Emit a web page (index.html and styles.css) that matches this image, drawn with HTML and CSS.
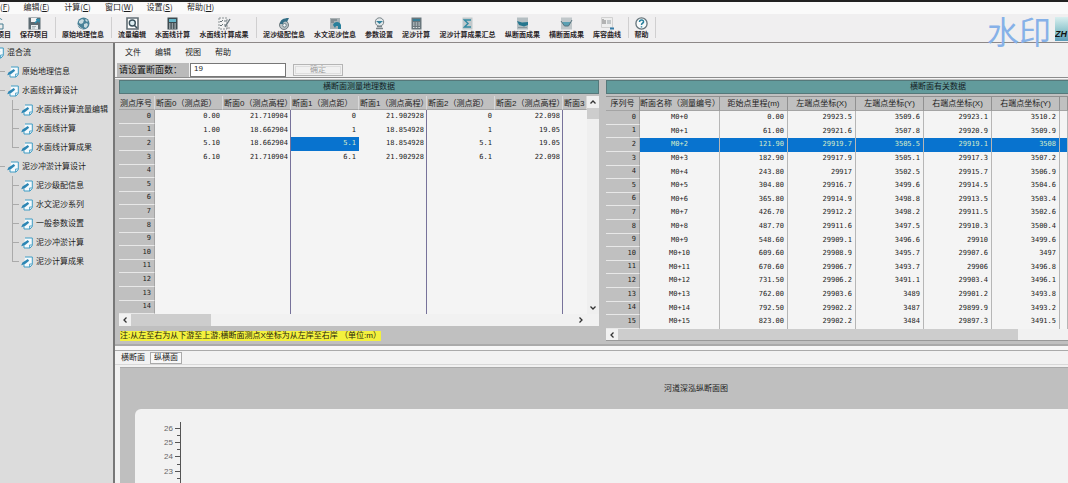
FILE: index.html
```html
<!DOCTYPE html>
<html lang="zh-CN">
<head>
<meta charset="utf-8">
<title>水面线计算</title>
<link rel="stylesheet" href="styles.css">
</head>
<body>
<svg class="defs" aria-hidden="true">
  <symbol id="doc" viewBox="0 0 12 12"><path d="M4 1h7.3v7.5L9 11H3V8.5" fill="#f4fafd" stroke="#3f9cc4" stroke-width="1"/><path d="M11 8H8.6v3" fill="none" stroke="#3f9cc4" stroke-width=".9"/><path d="M.2 9.200 1.400 6.600 6.800 3l1.400 1.700-4.400 3.500z" fill="#2c86b4"/></symbol>
</svg>
<nav class="menubar">
  <button class="first">文件(<u>F</u>)</button><button>编辑(<u>E</u>)</button><button>计算(<u>C</u>)</button><button>窗口(<u>W</u>)</button><button>设置(<u>S</u>)</button><button>帮助(<u>H</u>)</button>
</nav>
<header class="toolbar">
  <button class="c4"><svg viewBox="0 0 13 13"><path d="M2 5h4l1 2h5v5H2zM6 4c1-3 4-3 5-1" fill="#eee" stroke="#467d91"/></svg>打开项目</button>
  <button class="c4"><svg viewBox="0 0 13 13"><path d="M.5.5h12v12H.5z" fill="#5d6b73"/><path d="M3 1h6v4H3z" fill="#f2f2f2"/><path d="M3 8h7v4.500H3z" fill="#e9eef0"/><path d="M4 9.500h4M4 11h3" stroke="#88959b" stroke-width=".7"/><path d="M7 6l3-3M8 2.500h3v3" fill="none" stroke="#2f8eae" stroke-width="1.500"/></svg>保存项目</button>
  <i class="sep"></i>
  <button class="c6"><svg viewBox="0 0 13 13"><circle cx="6.500" cy="6.500" r="6" fill="#4a8298"/><path d="M2 4l3-2 2 1-1 3-2 1-2-1zM7 7l3-1 1 2-2 3-2-1zM9 2l2 2-1 1-2-2z" fill="#c9dbe0"/><path d="M1 8l3 3 2 1" stroke="#a9bac0" fill="none"/></svg>原始地理信息</button>
  <i class="sep"></i>
  <button class="c4"><svg viewBox="0 0 13 13"><path d="M1 1h11v11H1z" fill="#fff" stroke="#626e75" stroke-width="1.600"/><circle cx="6.300" cy="6" r="3" fill="#dcecf1" stroke="#394f5a" stroke-width="1.400"/><path d="M8 8l3 3" stroke="#394f5a" stroke-width="1.600"/></svg>流量编辑</button>
  <button class="c5"><svg viewBox="0 0 13 13"><path d="M1.500.5h10v12h-10z" fill="#3c4a50"/><path d="M3 2h7v3H3z" fill="#63b5c9"/><path d="M3 7h7M3 9h7M3 11h7" stroke="#e8eef0" stroke-dasharray="1.500 1.200"/></svg>水面线计算</button>
  <button class="c7"><svg viewBox="0 0 13 13"><path d="M1 1h8v11H1z" fill="#f3f3f3" stroke="#8b9295" stroke-dasharray="2 1"/><path d="M2 4l1 1 2-2M2 8l1 1 2-2M6 4h3M6 8h2" fill="none" stroke="#657176"/><path d="M7 10l5-8" stroke="#6c797e" stroke-width="1.400"/><path d="M8 11h4" stroke="#999"/></svg>水面线计算成果</button>
  <i class="sep"></i>
  <button class="c6"><svg viewBox="0 0 13 13"><circle cx="6" cy="8" r="4.500" fill="#bbc2c5" stroke="#6f7b80"/><path d="M2 7c0-4 3-6 9-6L9 5C7 4 5 5 5 7z" fill="#346e86"/><circle cx="6.500" cy="8.300" r="1.800" fill="#eef2f3" stroke="#54707b" stroke-width=".8"/></svg>泥沙级配信息</button>
  <button class="c6"><svg viewBox="0 0 13 13"><path d="M1 1h10v11H1z" fill="#a9b1b4"/><path d="M2 3h6M2 5h3" stroke="#5c6b72"/><path d="M4 8c1-4 7-4 8 0v4H9V9H7l-1 2z" fill="#297f9b"/></svg>水文泥沙信息</button>
  <button class="c4"><svg viewBox="0 0 13 13"><circle cx="6.500" cy="5" r="4.200" fill="#e2e7e9" stroke="#768287"/><path d="M3 4h7L6.500 7z" fill="#34809b"/><path d="M4 9.500h5M3 11.500h7" stroke="#7b858a" stroke-width="1.300"/></svg>参数设置</button>
  <button class="c4"><svg viewBox="0 0 13 13"><path d="M1.500.5h10v12h-10z" fill="#69767c"/><path d="M3 2h7v2H3z" fill="#367d96"/><path d="M3 6h7M3 8h7M3 10.500h7" stroke="#dce2e4" stroke-dasharray="1.500 1.200"/></svg>泥沙计算</button>
  <button class="c8"><svg viewBox="0 0 13 13"><path d="M1.500.5h10v12h-10z" fill="#c1c8cb"/><path d="M10 3H3.500L7 6.500 3.500 10H10" fill="none" stroke="#338ba3" stroke-width="1.500"/></svg>泥沙计算成果汇总</button>
  <button class="c5"><svg viewBox="0 0 13 13"><path d="M1 .5h11v12H1z" fill="#b4bec2"/><path d="M1 4l5 1.500 6-.5v3L8 9.500 3 8z" fill="#25768e"/><path d="M2 10.500h9" stroke="#8c999e"/></svg>纵断面成果</button>
  <button class="c5"><svg viewBox="0 0 13 13"><path d="M1 .5h11v12H1z" fill="#c0c7ca"/><path d="M2 5h9L8.500 9h-4z" fill="#5aa0b3"/><path d="M1 4l3.500 5h4L12 3" fill="none" stroke="#54737e"/></svg>横断面成果</button>
  <button class="c4"><svg viewBox="0 0 13 13"><path d="M.5.5h11v10H.5z" fill="#eee" stroke="#d1d1d1"/><path d="M2 2v5M4 3v4" stroke="#777"/><path d="M6 3h4v4H6z" fill="#c2c6c8"/><path d="M9 10.500h4v2H9z" fill="#347ba8"/></svg>库容曲线</button>
  <i class="sep"></i>
  <button class="c2"><svg viewBox="0 0 13 13"><circle cx="6.500" cy="6.500" r="5.600" fill="#f7fafb" stroke="#65747b" stroke-width="1.300"/><path d="M4.500 5c0-3 4.500-2.500 4 0-.3 1.500-2 1-2 3M6.500 9.200v1.300" fill="none" stroke="#277f9c" stroke-width="1.500"/></svg>帮助</button>
  <i class="sep"></i>
  <span class="brand">ZH</span>
</header>
<div class="watermark">水印</div>
<div class="body">
  <aside class="tree">
    <ul>
      <li class="root"><svg><use href="#doc"/></svg>混合流</li>
      <li class="lv1"><svg><use href="#doc"/></svg>原始地理信息</li>
      <li class="lv1"><svg><use href="#doc"/></svg>水面线计算设计</li>
      <li class="lv2"><svg><use href="#doc"/></svg>水面线计算流量编辑</li>
      <li class="lv2"><svg><use href="#doc"/></svg>水面线计算</li>
      <li class="lv2 last"><svg><use href="#doc"/></svg>水面线计算成果</li>
      <li class="lv1"><svg><use href="#doc"/></svg>泥沙冲淤计算设计</li>
      <li class="lv2"><svg><use href="#doc"/></svg>泥沙级配信息</li>
      <li class="lv2"><svg><use href="#doc"/></svg>水文泥沙系列</li>
      <li class="lv2"><svg><use href="#doc"/></svg>一般参数设置</li>
      <li class="lv2"><svg><use href="#doc"/></svg>泥沙冲淤计算</li>
      <li class="lv2 last"><svg><use href="#doc"/></svg>泥沙计算成果</li>
    </ul>
  </aside>
  <main>
    <nav class="submenu"><button>文件</button><button>编辑</button><button>视图</button><button>帮助</button></nav>
    <form class="setup"><label for="count">请设置断面数：</label><input id="count" type="text" value="19"><button type="button" disabled>确定</button></form>
    <div class="panels">
      <section class="left">
        <h2>横断面测量地理数据</h2>
        <div class="grid-wrap">
          <table class="grid geo">
            <colgroup><col class="seq"><col class="num"><col class="num"><col class="num"><col class="num"><col class="num"><col class="num"><col class="cut"></colgroup>
            <thead><tr><th>测点序号</th><th>断面0（测点距）</th><th>断面0（测点高程）</th><th>断面1（测点距）</th><th>断面1（测点高程）</th><th>断面2（测点距）</th><th>断面2（测点高程）</th><th>断面3</th></tr></thead>
            <tbody>
              <tr><th>0</th><td>0.00</td><td>21.710904</td><td>0</td><td>21.902928</td><td>0</td><td>22.098</td><td></td></tr>
              <tr><th>1</th><td>1.00</td><td>18.662904</td><td>1</td><td>18.854928</td><td>1</td><td>19.05</td><td></td></tr>
              <tr><th>2</th><td>5.10</td><td>18.662904</td><td class="sel">5.1</td><td>18.854928</td><td>5.1</td><td>19.05</td><td></td></tr>
              <tr><th>3</th><td>6.10</td><td>21.710904</td><td>6.1</td><td>21.902928</td><td>6.1</td><td>22.098</td><td></td></tr>
              <tr><th>4</th><td></td><td></td><td></td><td></td><td></td><td></td><td></td></tr>
              <tr><th>5</th><td></td><td></td><td></td><td></td><td></td><td></td><td></td></tr>
              <tr><th>6</th><td></td><td></td><td></td><td></td><td></td><td></td><td></td></tr>
              <tr><th>7</th><td></td><td></td><td></td><td></td><td></td><td></td><td></td></tr>
              <tr><th>8</th><td></td><td></td><td></td><td></td><td></td><td></td><td></td></tr>
              <tr><th>9</th><td></td><td></td><td></td><td></td><td></td><td></td><td></td></tr>
              <tr><th>10</th><td></td><td></td><td></td><td></td><td></td><td></td><td></td></tr>
              <tr><th>11</th><td></td><td></td><td></td><td></td><td></td><td></td><td></td></tr>
              <tr><th>12</th><td></td><td></td><td></td><td></td><td></td><td></td><td></td></tr>
              <tr><th>13</th><td></td><td></td><td></td><td></td><td></td><td></td><td></td></tr>
              <tr><th>14</th><td></td><td></td><td></td><td></td><td></td><td></td><td></td></tr>
            </tbody>
          </table>
          <div class="vscroll"><svg viewBox="0 0 12 12"><path d="M3.500 7.500 6 5l2.500 2.500"/></svg><i></i><svg class="end" viewBox="0 0 12 12"><path d="M3.500 4.500 6 7l2.500-2.500"/></svg></div>
        </div>
        <div class="hscroll"><svg viewBox="0 0 12 12"><path d="M7.500 3.500 5 6l2.500 2.500"/></svg><i></i><svg class="end" viewBox="0 0 12 12"><path d="M4.500 3.500 7 6 4.500 8.500"/></svg></div>
        <p class="note"><mark>注:从左至右为从下游至上游;横断面测点X坐标为从左岸至右岸 （单位:m）</mark></p>
      </section>
      <section class="right">
        <h2>横断面有关数据</h2>
        <table class="grid sections">
          <colgroup><col class="idx"><col class="name"><col class="num"><col class="num"><col class="num"><col class="num"><col class="num"><col class="rest"></colgroup>
          <thead><tr><th>序列号</th><th>断面名称（测量编号）</th><th>距始点里程(m)</th><th>左端点坐标(X)</th><th>左端点坐标(Y)</th><th>右端点坐标(X)</th><th>右端点坐标(Y)</th><th></th></tr></thead>
          <tbody>
            <tr><th>0</th><td>M0+0</td><td>0.00</td><td>29923.5</td><td>3509.6</td><td>29923.1</td><td>3510.2</td><td></td></tr>
            <tr><th>1</th><td>M0+1</td><td>61.00</td><td>29921.6</td><td>3507.8</td><td>29920.9</td><td>3509.9</td><td></td></tr>
            <tr class="sel"><th>2</th><td>M0+2</td><td>121.90</td><td>29919.7</td><td>3505.5</td><td>29919.1</td><td>3508</td><td></td></tr>
            <tr><th>3</th><td>M0+3</td><td>182.90</td><td>29917.9</td><td>3505.1</td><td>29917.3</td><td>3507.2</td><td></td></tr>
            <tr><th>4</th><td>M0+4</td><td>243.80</td><td>29917</td><td>3502.5</td><td>29915.7</td><td>3506.9</td><td></td></tr>
            <tr><th>5</th><td>M0+5</td><td>304.80</td><td>29916.7</td><td>3499.6</td><td>29914.5</td><td>3504.6</td><td></td></tr>
            <tr><th>6</th><td>M0+6</td><td>365.80</td><td>29914.9</td><td>3498.8</td><td>29913.5</td><td>3503.4</td><td></td></tr>
            <tr><th>7</th><td>M0+7</td><td>426.70</td><td>29912.2</td><td>3498.2</td><td>29911.5</td><td>3502.6</td><td></td></tr>
            <tr><th>8</th><td>M0+8</td><td>487.70</td><td>29911.6</td><td>3497.5</td><td>29910.3</td><td>3500.4</td><td></td></tr>
            <tr><th>9</th><td>M0+9</td><td>548.60</td><td>29909.1</td><td>3496.6</td><td>29910</td><td>3499.6</td><td></td></tr>
            <tr><th>10</th><td>M0+10</td><td>609.60</td><td>29908.9</td><td>3495.7</td><td>29907.6</td><td>3497</td><td></td></tr>
            <tr><th>11</th><td>M0+11</td><td>670.60</td><td>29906.7</td><td>3493.7</td><td>29906</td><td>3496.8</td><td></td></tr>
            <tr><th>12</th><td>M0+12</td><td>731.50</td><td>29906.2</td><td>3491.1</td><td>29903.4</td><td>3496.1</td><td></td></tr>
            <tr><th>13</th><td>M0+13</td><td>762.00</td><td>29903.6</td><td>3489</td><td>29901.2</td><td>3493.8</td><td></td></tr>
            <tr><th>14</th><td>M0+14</td><td>792.50</td><td>29902.2</td><td>3487</td><td>29899.9</td><td>3493.2</td><td></td></tr>
            <tr><th>15</th><td>M0+15</td><td>823.00</td><td>29902.2</td><td>3484</td><td>29897.3</td><td>3491.5</td><td></td></tr>
          </tbody>
        </table>
        <div class="hscroll"><svg viewBox="0 0 12 12"><path d="M7.500 3.500 5 6l2.500 2.500"/></svg><i></i></div>
      </section>
    </div>
    <div class="splitter"></div>
    <div class="tabs" role="tablist"><button role="tab">横断面</button><button role="tab" class="active" aria-selected="true">纵横面</button></div>
    <section class="chart">
      <h3>河道深泓纵断面图</h3>
      <div class="plot">
        <svg viewBox="0 0 60 90">
          <path d="M45.500 13v77M40 19.500h5M40 33.500h5M40 47.500h5M40 62.500h5M40 76.500h5M42 26.500h3M42 40.500h3M42 55.500h3M42 69.500h3M42 83.500h3" fill="none" stroke="#555"/>
          <g text-anchor="end"><text x="38" y="22">26</text><text x="38" y="36">25</text><text x="38" y="50">24</text><text x="38" y="65">23</text><text x="38" y="79">22</text></g>
        </svg>
      </div>
    </section>
  </main>
</div>
</body>
</html>
```

FILE: styles.css
```css
* { box-sizing: border-box; }
body {
  margin: 0;
  height: 100vh;
  overflow: hidden;
  display: flex;
  flex-direction: column;
  position: relative;
  background: #f1f1f1;
  color: #1c1c1c;
  font: 8px/12px "Liberation Sans", "Noto Sans CJK SC", sans-serif;
  white-space: nowrap;
}
button, input { font: inherit; color: inherit; }
button { border: 0; padding: 0; background: none; white-space: nowrap; }
.defs { display: none; }
h2, h3, p, ul { margin: 0; padding: 0; font-weight: 400; }

.menubar {
  flex: none;
  display: flex;
  gap: 14px;
  height: 14px;
  padding-bottom: 1px;
  margin-left: -16px;
  border-top: 2px solid #222;
  background: #fafafa;
}
.menubar button { height: 10px; line-height: 10px; width: 27px; font-family: "Noto Sans CJK SC", sans-serif; }
.menubar .first { width: 25px; }

.toolbar {
  flex: none;
  display: flex;
  gap: 7px;
  height: 29px;
  padding: 3px 0 0;
  margin-left: -18px;
  border-bottom: 1px solid #8d8888;
  background: #f0eff0;
}
.toolbar button {
  display: flex;
  flex-direction: column;
  align-items: center;
  flex: none;
  font-size: 7px;
  line-height: 9px;
  font-weight: 700;
  color: #2a2528;
}
.toolbar button svg { width: 13px; height: 13px; flex: none; }
.c2 { width: 15px; }
.c4 { width: 30px; }
.c5 { width: 37px; }
.c6 { width: 44px; }
.c7 { width: 52px; }
.c8 { width: 59px; }
.sep { flex: none; width: 1px; height: 21px; margin: 0 -2px 0 -1px; background: #d0cfd0; }
.brand {
  width: 13px;
  height: 24px;
  margin-left: auto;
  padding-top: 12px;
  overflow: hidden;
  background: linear-gradient(#d9efef, #8cc4cc 60%, #5a9bb8);
  color: #111;
  font: italic 700 9px/10px "Liberation Sans", sans-serif;
}
.watermark {
  position: absolute;
  top: 10px;
  right: 17px;
  font: 32px/40px "Noto Sans CJK SC", sans-serif;
  color: #86b1e8;
}

.body { flex: 1; min-height: 0; display: flex; }
.tree { flex: none; width: 113px; background: #dcdcdc; overflow: hidden; }
.tree ul { list-style: none; }
.tree li { display: flex; align-items: center; height: 19px; gap: 3px; }
.tree svg { flex: none; width: 12px; height: 12px; }
.tree .root { margin-left: -8px; }
.tree .lv1 { padding-left: 7px; background: linear-gradient(#aaa, #aaa) 0 9px / 5px 1px no-repeat; }
.tree .lv2 {
  padding-left: 21px;
  background: linear-gradient(#aaa, #aaa) 12px 0 / 1px 19px no-repeat, linear-gradient(#aaa, #aaa) 12px 9px / 7px 1px no-repeat;
}
.tree .last { background-size: 1px 9px, 7px 1px; }

main {
  flex: 1;
  min-width: 0;
  display: flex;
  flex-direction: column;
  border-left: 2px solid #777;
}
.submenu { flex: none; display: flex; gap: 14px; height: 19px; padding: 0 10px; align-items: center; }
.submenu button { width: 16px; }
.setup { flex: none; display: flex; align-items: center; height: 16px; padding-left: 2px; border-bottom: 1px solid #8d8d8d; }
.setup label { width: 72px; height: 14px; padding-left: 2px; background: #bababa; font-size: 9px; line-height: 14px; color: #111; overflow: hidden; }
.setup input { width: 96px; height: 14px; margin: 0 7px 0 1px; padding: 0 3px 2px; border: 1px solid #777; background: #fff; line-height: 10px; }
.setup button { width: 50px; height: 12px; border: 1px solid #b5b5b5; outline: 1px solid #dedede; outline-offset: -3px; color: #9c9c9c; line-height: 10px; }

.panels { flex: none; display: flex; gap: 7px; padding-left: 4px; border-top: 1px solid #f6f6f6; background: #c0c0c0; }
.left { flex: none; width: 480px; }
.right { flex: 1; min-width: 0; overflow: hidden; }
h2 {
  height: 14px;
  margin: 1px 0 2px;
  border: 1px solid #55787a;
  background: #629b9c;
  color: #142023;
  font-size: 8px;
  line-height: 12px;
  text-align: center;
}
.right h2 { padding-left: 201px; border-right: 0; }
.grid-wrap { display: flex; background: #f4f4f4; }
.grid { table-layout: fixed; border-collapse: separate; border-spacing: 0; background: #f4f4f4; }
.geo { width: 468px; }
.sections { width: 100%; }
.seq { width: 36px; }
.num { width: 68px; }
.cut { width: 24px; }
.idx { width: 34px; }
.name { width: 80px; }
.grid th, .grid td { padding: 0 3px 1px; height: 14px; line-height: 11px; text-align: right; font-weight: 400; }
.grid tbody { font-family: "DejaVu Sans Mono", monospace; font-size: 7px; }
.grid tr:nth-child(5n+2) > *, .grid tr:nth-child(5n+5) > * { height: 13px; }
.grid th { background: #c0c0c0; border-bottom: 1px solid #e8e8e8; border-right: 1px solid #a4a4a4; }
.grid thead th { padding: 1px 0 0 1px; text-align: left; color: #222; border-bottom-color: #a4a4a4; border-right-color: #d8d8d8; }
.sections thead th { text-align: center; padding: 0; border-right-color: #909090; }
.sections thead tr > * { height: 15px; border-top: 1px solid #909090; }
.geo td:nth-child(2n+3) { border-right: 1px solid #77729a; }
.geo td:nth-child(3), .geo td:nth-child(5), .geo td:nth-child(7) { padding-right: 2px; }
.sections td { border-right: 1px solid #b6b6b6; }
.sections td:nth-child(2) { text-align: center; }
.grid td.sel, .grid .sel td { background: #0873cf; color: #d5ecc8; }

.vscroll { width: 12px; display: flex; flex-direction: column; background: #efefef; }
.vscroll svg, .hscroll svg { flex: none; width: 12px; height: 12px; fill: none; stroke: #333; stroke-width: 1.3; }
.vscroll i { height: 11px; background: #cdcdcd; }
.vscroll .end { margin-top: auto; }
.hscroll { display: flex; height: 12px; background: #f1f1f1; }
.hscroll i { width: 80px; background: #cdcdcd; }
.hscroll .end { margin-left: auto; margin-right: 12px; }
.right .hscroll { border-bottom: 1px solid #999; }
.right .hscroll i { width: 400px; }
.note { padding: 5px 1px 3px; line-height: 10px; }
mark { display: inline-block; height: 10px; background: #f3f13e; color: #26240e; }

.splitter { flex: none; height: 7px; border-top: 2px solid #aaa; border-bottom: 1px solid #aaa; background: #f7f7f7; }
.tabs { flex: none; display: flex; align-items: center; gap: 3px; height: 14px; padding-left: 4px; border-bottom: 1px solid #d8d8d8; background: #f2f2f2; }
.tabs button { height: 12px; padding: 0 2px; line-height: 10px; }
.tabs .active { padding: 0 3px; border: 1px solid #aaa; background: #f8f8f8; }
.chart { flex: 1; min-height: 0; display: flex; flex-direction: column; margin: 2px 0 0 5px; border-top: 1px solid #aaa; background: #bfbfbf; }
.chart h3 { padding: 15px 0 14px 204px; font-size: 8px; line-height: 12px; text-align: center; }
.plot { flex: 1; min-height: 0; overflow: hidden; margin-left: 15px; background: #f2f2f2; border-radius: 6px 0 0 0; }
.plot svg { display: block; width: 60px; height: 90px; }
.plot text { font-size: 8px; fill: #666; }
```
